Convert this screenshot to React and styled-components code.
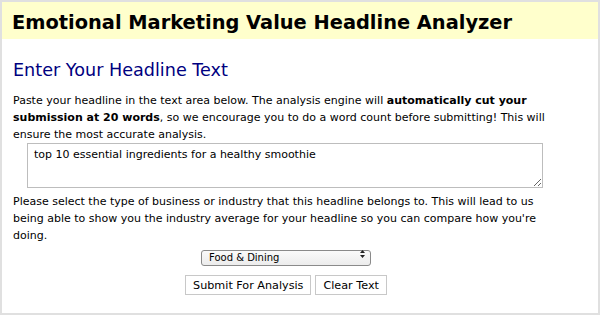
import React, { useState } from "react";
import styled, { createGlobalStyle } from "styled-components";

const GlobalStyle = createGlobalStyle`
  html, body {
    margin: 0;
    padding: 0;
    background: #ffffff;
  }
  body {
    font-family: "DejaVu Sans", Verdana, sans-serif;
  }
`;

const Frame = styled.div`
  box-sizing: border-box;
  width: 600px;
  height: 315px;
  border: 2px solid #e0e0e0;
  overflow: hidden;
  background: #fff;
`;

const Banner = styled.h1`
  box-sizing: border-box;
  margin: 0;
  height: 37px;
  padding: 3px 0 0 10px;
  display: flex;
  align-items: center;
  background: #ffffcc;
  font-family: "DejaVu Sans", Verdana, sans-serif;
  font-size: 19.4px;
  font-weight: bold;
  color: #000;
`;

const Body = styled.div`
  width: 546px;
  padding: 21px 0 0 11px;
`;

const SubTitle = styled.h2`
  margin: 0 0 12px 0;
  font-family: "DejaVu Sans", Verdana, sans-serif;
  font-weight: normal;
  font-size: 17.6px;
  color: #000080;
`;

const Para = styled.p`
  margin: 0;
  font-size: 11px;
  line-height: 17px;
  color: #000;
`;

const HeadlineBox = styled.textarea`
  display: block;
  box-sizing: border-box;
  width: 516px;
  height: 45px;
  margin: 0 0 5px 14px;
  padding: 4px 6px;
  border: 1px solid #bdbdbd;
  font-family: "DejaVu Sans", Verdana, sans-serif;
  font-size: 11px;
  color: #000;
  resize: vertical;
`;

const Center = styled.div`
  display: flex;
  flex-direction: column;
  align-items: center;
  gap: 12px;
  margin-top: 2px;
`;

const SelectWrap = styled.div`
  position: relative;
  width: 170px;
  height: 16px;
`;

const Select = styled.select`
  box-sizing: border-box;
  width: 100%;
  height: 16px;
  padding: 0 0 0 7px;
  border: 1px solid #8a8a8a;
  border-radius: 3px;
  background: linear-gradient(#fafafa, #ececec);
  font-family: "DejaVu Sans", Verdana, sans-serif;
  font-size: 10px;
  color: #000;
  appearance: none;
  -webkit-appearance: none;
  outline: none;
`;

const Arrows = styled.svg`
  position: absolute;
  right: 6px;
  top: 4px;
  pointer-events: none;
`;

const ButtonRow = styled.div`
  display: flex;
  gap: 4px;
  margin-top: 1px;
`;

const Button = styled.button`
  height: 20px;
  padding: 0 7px;
  border: 1px solid #c8c8c8;
  background: #fff;
  font-family: "DejaVu Sans", Verdana, sans-serif;
  font-size: 11.2px;
  color: #000;
`;

export default function App() {
  const [text, setText] = useState("top 10 essential ingredients for a healthy smoothie");
  const [industry, setIndustry] = useState("food");

  return (
    <>
      <GlobalStyle />
      <Frame>
        <Banner>Emotional Marketing Value Headline Analyzer</Banner>
        <Body>
          <SubTitle>Enter Your Headline Text</SubTitle>
          <Para>
            <span>Paste your headline in the text area below. The analysis engine will</span>{" "}
            <b>automatically cut your</b> <b>submission at 20 words</b>
            <span>, so we encourage you to do a word count before submitting! This will</span>{" "}
            <span>ensure the most accurate analysis.</span>
          </Para>
          <HeadlineBox value={text} onChange={(e) => setText(e.target.value)} />
          <Para>
            Please select the type of business or industry that this headline belongs to. This
            will lead to us being able to show you the industry average for your headline so you
            can compare how you're doing.
          </Para>
          <Center>
            <SelectWrap>
              <Select value={industry} onChange={(e) => setIndustry(e.target.value)}>
                <option value="food">Food &amp; Dining</option>
                <option value="tech">Technology</option>
              </Select>
              <Arrows width="5" height="8" viewBox="0 0 5 8">
                <path d="M0 3 L2.5 0 L5 3 Z M0 5 L2.5 8 L5 5 Z" fill="#222" />
              </Arrows>
            </SelectWrap>
            <ButtonRow>
              <Button>Submit For Analysis</Button>
              <Button onClick={() => setText("")}>Clear Text</Button>
            </ButtonRow>
          </Center>
        </Body>
      </Frame>
    </>
  );
}
